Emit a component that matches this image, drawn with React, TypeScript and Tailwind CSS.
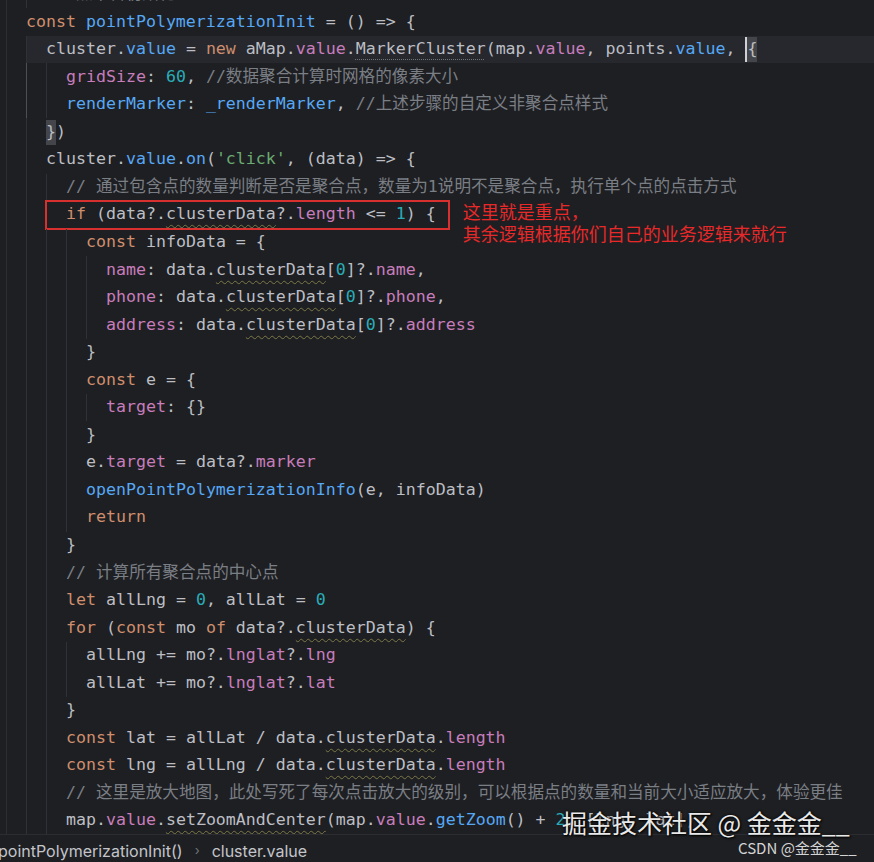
import React from 'react';

type Kind = 't' | 'k' | 'p' | 'f' | 'n' | 's' | 'c' | 'u' | 'd' | 'b';
type Tok = [Kind, string];

interface Line {
  indent: number;
  toks: Tok[];
  current?: boolean;
  boxed?: boolean;
}

// token colours, written out in full so Tailwind picks them up
const KIND: Record<Kind, string> = {
  t: 'text-[#bcbec4]',
  k: 'text-[#cf8e6d]',
  p: 'text-[#c77dbb]',
  f: 'text-[#56a8f5]',
  n: 'text-[#2aacb8]',
  s: 'text-[#6aab73]',
  c: 'text-[#7a7e85]',
  u: 'text-[#bcbec4] underline decoration-wavy decoration-[#7d7848] decoration-1 underline-offset-[5px]',
  d: 'text-[#bcbec4] underline decoration-dotted decoration-[#6f737a] decoration-1 underline-offset-[5px]',
  b: 'text-[#bcbec4] bg-[#43454a]',
};

const LINES: Line[] = [
  { indent: 1, toks: [['c', '// 点聚合初始化']] },
  { indent: 0, toks: [['k', 'const'], ['t', ' '], ['f', 'pointPolymerizationInit'], ['t', ' = () => {']] },
  {
    indent: 1,
    current: true,
    toks: [
      ['t', 'cluster.'], ['f', 'value'], ['t', ' = '], ['k', 'new'], ['t', ' aMap.'], ['p', 'value'], ['t', '.'],
      ['d', 'MarkerCluster'], ['t', '(map.'], ['p', 'value'], ['t', ', points.'], ['f', 'value'], ['t', ', '],
    ],
  },
  { indent: 2, toks: [['p', 'gridSize'], ['t', ': '], ['n', '60'], ['t', ', '], ['c', '//数据聚合计算时网格的像素大小']] },
  { indent: 2, toks: [['f', 'renderMarker'], ['t', ': '], ['f', '_renderMarker'], ['t', ', '], ['c', '//上述步骤的自定义非聚合点样式']] },
  { indent: 1, toks: [['b', '}'], ['t', ')']] },
  { indent: 1, toks: [['t', 'cluster.'], ['f', 'value'], ['t', '.'], ['f', 'on'], ['t', '('], ['s', "'click'"], ['t', ', (data) => {']] },
  { indent: 2, toks: [['c', '// 通过包含点的数量判断是否是聚合点，数量为1说明不是聚合点，执行单个点的点击方式']] },
  {
    indent: 2,
    boxed: true,
    toks: [['k', 'if'], ['t', ' (data?.'], ['u', 'clusterData'], ['t', '?.'], ['p', 'length'], ['t', ' <= '], ['n', '1'], ['t', ') {']],
  },
  { indent: 3, toks: [['k', 'const'], ['t', ' infoData = {']] },
  { indent: 4, toks: [['p', 'name'], ['t', ': data.'], ['u', 'clusterData'], ['t', '['], ['n', '0'], ['t', ']?.'], ['p', 'name'], ['t', ',']] },
  { indent: 4, toks: [['p', 'phone'], ['t', ': data.'], ['u', 'clusterData'], ['t', '['], ['n', '0'], ['t', ']?.'], ['p', 'phone'], ['t', ',']] },
  { indent: 4, toks: [['p', 'address'], ['t', ': data.'], ['u', 'clusterData'], ['t', '['], ['n', '0'], ['t', ']?.'], ['p', 'address']] },
  { indent: 3, toks: [['t', '}']] },
  { indent: 3, toks: [['k', 'const'], ['t', ' e = {']] },
  { indent: 4, toks: [['p', 'target'], ['t', ': {}']] },
  { indent: 3, toks: [['t', '}']] },
  { indent: 3, toks: [['t', 'e.'], ['p', 'target'], ['t', ' = data?.'], ['p', 'marker']] },
  { indent: 3, toks: [['f', 'openPointPolymerizationInfo'], ['t', '(e, infoData)']] },
  { indent: 3, toks: [['k', 'return']] },
  { indent: 2, toks: [['t', '}']] },
  { indent: 2, toks: [['c', '// 计算所有聚合点的中心点']] },
  { indent: 2, toks: [['k', 'let'], ['t', ' allLng = '], ['n', '0'], ['t', ', allLat = '], ['n', '0']] },
  {
    indent: 2,
    toks: [['k', 'for'], ['t', ' ('], ['k', 'const'], ['t', ' mo '], ['k', 'of'], ['t', ' data?.'], ['u', 'clusterData'], ['t', ') {']],
  },
  { indent: 3, toks: [['t', 'allLng += mo?.'], ['p', 'lnglat'], ['t', '?.'], ['p', 'lng']] },
  { indent: 3, toks: [['t', 'allLat += mo?.'], ['p', 'lnglat'], ['t', '?.'], ['p', 'lat']] },
  { indent: 2, toks: [['t', '}']] },
  { indent: 2, toks: [['k', 'const'], ['t', ' lat = allLat / data.'], ['u', 'clusterData'], ['t', '.'], ['p', 'length']] },
  { indent: 2, toks: [['k', 'const'], ['t', ' lng = allLng / data.'], ['u', 'clusterData'], ['t', '.'], ['p', 'length']] },
  { indent: 2, toks: [['c', '// 这里是放大地图，此处写死了每次点击放大的级别，可以根据点的数量和当前大小适应放大，体验更佳']] },
  {
    indent: 2,
    toks: [
      ['t', 'map.'], ['p', 'value'], ['t', '.'], ['u', 'setZoomAndCenter'], ['t', '(map.'], ['p', 'value'], ['t', '.'],
      ['f', 'getZoom'], ['t', '() + '], ['n', '2'], ['t', ', [lng, lat])'],
    ],
  },
];

const Tokens: React.FC<{ toks: Tok[] }> = ({ toks }) => (
  <>
    {toks.map(([kind, text], i) => (
      <span key={i} className={KIND[kind]}>
        {text}
      </span>
    ))}
  </>
);

const CodeLine: React.FC<{ line: Line; row: number }> = ({ line, row }) => {
  // guides: the first one sits outside the current-line band
  const inner = Array.from({ length: line.indent });
  const activeGuide = row === 3 || row === 4;

  return (
    <div className="flex h-[27.55px] items-center whitespace-pre">
      <div className="w-[6px] h-full shrink-0" />
      <div className="w-[20px] h-full shrink-0 border-l border-[#2b2d31]" />
      <div className={`flex flex-1 h-full items-center ${line.current ? 'bg-[#26282e]' : ''}`}>
        {inner.map((_, i) => (
          <div
            key={i}
            className={`w-[20px] h-full shrink-0 border-l ${
              activeGuide && i === 0 ? 'border-[#4b4e55]' : 'border-[#2f3136]'
            }`}
          />
        ))}
        {line.boxed ? (
          <>
            <span className="flex items-center h-[30px] -ml-[21px] pl-[19px] pr-[12px] border-2 border-[#d8302f]">
              <Tokens toks={line.toks} />
            </span>
            <div className="ml-[13px] flex flex-col translate-y-[7px] text-[18px] leading-[22px] text-[#e8292a] font-['Noto_Sans_CJK_SC',sans-serif]">
              <span>这里就是重点，</span>
              <span>其余逻辑根据你们自己的业务逻辑来就行</span>
            </div>
          </>
        ) : (
          <Tokens toks={line.toks} />
        )}
        {line.current && (
          <span className="text-[#bcbec4] bg-[#43454a] border-l-2 border-[#ced0d6]">{'{'}</span>
        )}
      </div>
    </div>
  );
};

export default function App() {
  return (
    <div className="relative w-[874px] h-[862px] overflow-hidden bg-[#1e1f22] flex flex-col">
      <div className="flex-1 overflow-hidden">
        <div className="-mt-[19.3px] text-[16.6px] font-['DejaVu_Sans_Mono','Noto_Sans_CJK_SC',monospace]">
          {LINES.map((line, i) => (
            <CodeLine key={i} line={line} row={i} />
          ))}
        </div>
      </div>

      {/* breadcrumb bar */}
      <div className="h-[28px] shrink-0 border-t border-[#2b2d30] bg-[#1e1f22] flex items-center pt-[4px] gap-[12px] -ml-[2px] text-[16px] font-['Inter',sans-serif] text-[#c3c5cb]">
        <span>pointPolymerizationInit()</span>
        <span className="text-[#6f737a] text-[13px]">›</span>
        <span>cluster.value</span>
      </div>

      {/* watermarks */}
      <div className="absolute left-[562px] top-[805px] text-[25px] leading-[34px] text-[#e9e9e9] font-['Noto_Sans_CJK_SC',sans-serif] [text-shadow:0_0_3px_#000,1px_1px_2px_#000] whitespace-nowrap">
        掘金技术社区 @ 金金金__
      </div>
      <div className="absolute left-[738px] top-[837px] text-[15px] leading-[22px] text-[#d4d4d4] font-['Noto_Sans_CJK_SC',sans-serif] whitespace-nowrap">
        CSDN @金金金__
      </div>
    </div>
  );
}
